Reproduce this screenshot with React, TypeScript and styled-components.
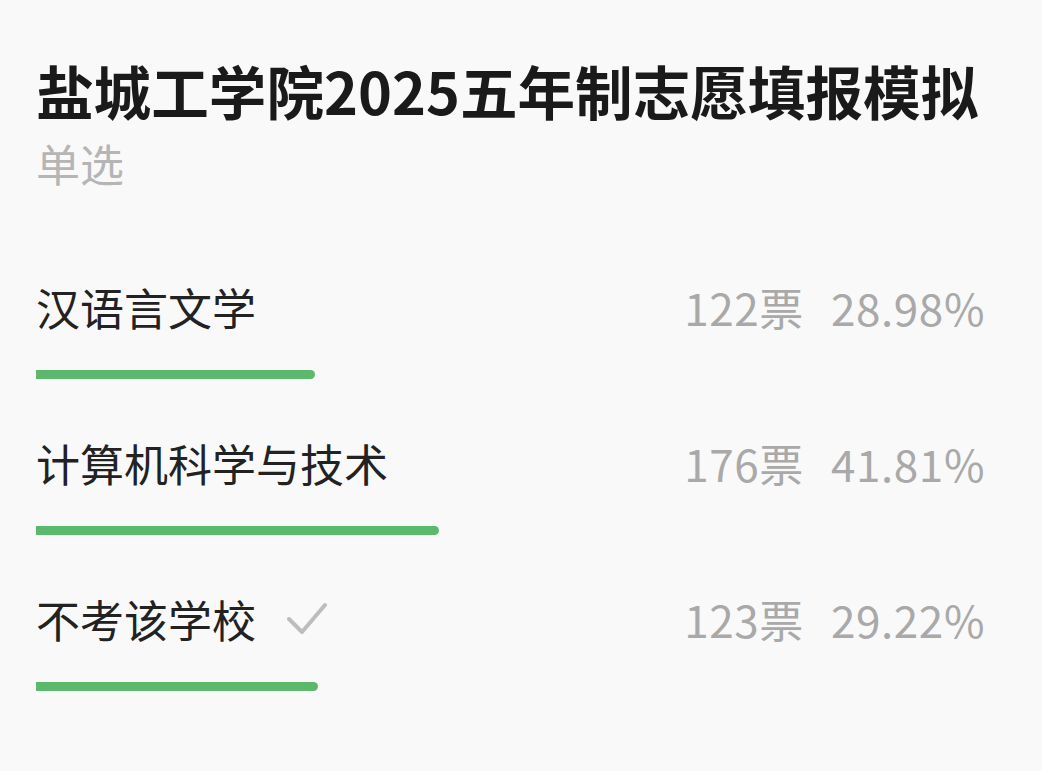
import React from 'react'
import styled, { createGlobalStyle } from 'styled-components'

const Global = createGlobalStyle`
  html, body {
    margin: 0;
    padding: 0;
    background: #f9f9f9;
  }
  body {
    font-family: "Noto Sans CJK SC", "Noto Sans", sans-serif;
  }
`

type Option = {
  label: string
  votes: number
  percent: number
  chosen?: boolean
}

const options: Option[] = [
  { label: '汉语言文学', votes: 122, percent: 28.98 },
  { label: '计算机科学与技术', votes: 176, percent: 41.81 },
  { label: '不考该学校', votes: 123, percent: 29.22, chosen: true },
]

export default function App() {
  return (
    <>
      <Global />
      <Page>
        <Title>盐城工学院2025五年制志愿填报模拟</Title>
        <Subtitle>单选</Subtitle>
        <List>
          {options.map((o) => (
            <Row key={o.label}>
              <Header>
                <Label>
                  {o.label}
                  {o.chosen && (
                    <Check width="40" height="36" viewBox="0 0 40 36">
                      <polyline points="2,18 15,31 38,4" />
                    </Check>
                  )}
                </Label>
                <Stats>
                  <span>{o.votes}票</span>
                  <span>{o.percent.toFixed(2)}%</span>
                </Stats>
              </Header>
              <Track>
                <Bar style={{ width: `${o.percent}%` }} />
              </Track>
            </Row>
          ))}
        </List>
      </Page>
    </>
  )
}

const Page = styled.main`
  box-sizing: border-box;
  width: 1042px;
  min-height: 771px;
  padding: 55px 42px 0 36px;
  display: flex;
  flex-direction: column;
`
const Title = styled.h1`
  margin: 0;
  font-size: 57.6px;
  line-height: 70px;
  font-weight: 600;
  color: #1a1a1a;
  white-space: nowrap;
`
const Subtitle = styled.div`
  margin-top: 12px;
  font-size: 44px;
  line-height: 52px;
  color: #b5b5b5;
`
const List = styled.div`
  margin-top: 92px;
  display: flex;
  flex-direction: column;
  gap: 58px;
`
const Row = styled.div`
  display: flex;
  flex-direction: column;
  gap: 37px;
`
const Header = styled.div`
  display: flex;
  justify-content: space-between;
  align-items: center;
  padding-right: 15px;
`
const Label = styled.div`
  display: flex;
  align-items: center;
  gap: 31px;
  font-size: 44px;
  line-height: 52px;
  color: #222;
`
const Check = styled.svg`
  fill: none;
  stroke: #bdbdbd;
  stroke-width: 4;
  stroke-linecap: round;
  stroke-linejoin: round;
`
const Stats = styled.div`
  display: flex;
  gap: 27px;
  font-size: 44px;
  line-height: 52px;
  letter-spacing: 0.6px;
  color: #a9a9a9;
`
const Track = styled.div`
  height: 9px;
`
const Bar = styled.div`
  height: 100%;
  background: #5cb96c;
  border-radius: 0 5px 5px 0;
`
